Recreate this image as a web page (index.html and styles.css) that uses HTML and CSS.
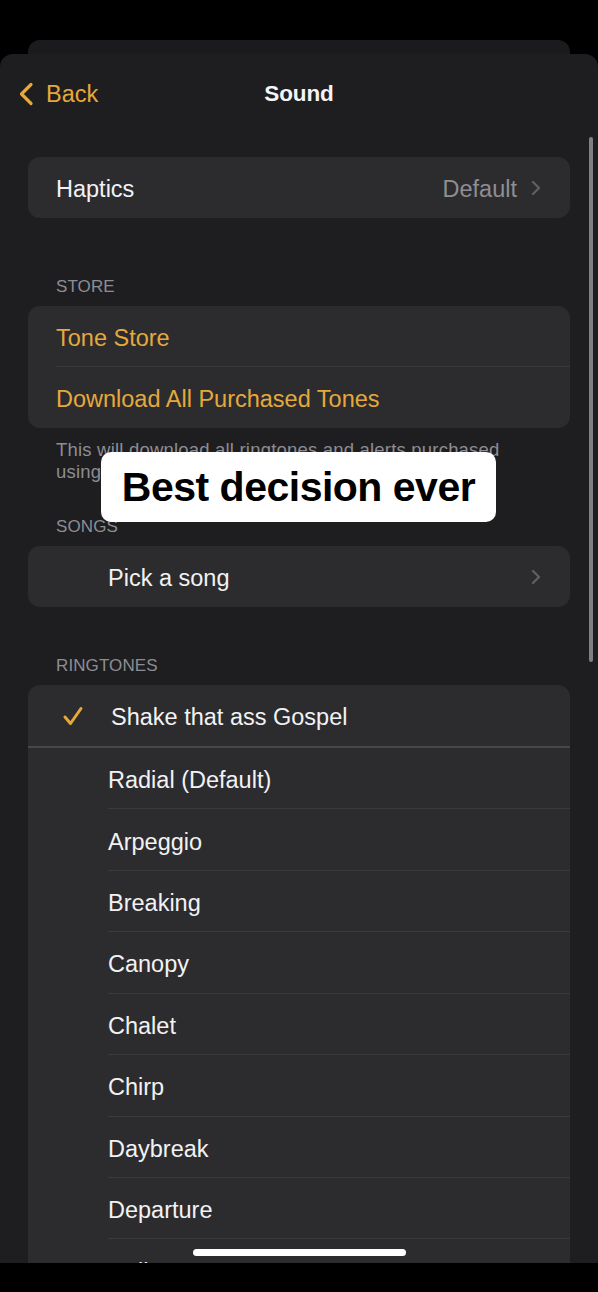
FILE: index.html
```html
<!DOCTYPE html>
<html lang="en">
<head>
<meta charset="utf-8">
<title>Sound</title>
<link rel="stylesheet" href="styles.css">
</head>
<body>
<div class="screen">
  <div class="behind"></div>
  <div class="sheet">
    <header class="nav">
      <div class="back">
        <svg class="back-chev" width="16" height="24" viewBox="0 0 16 24"><polyline points="13,2.5 3.5,12 13,21.5" fill="none" stroke="#e5a93b" stroke-width="3.2" stroke-linecap="round" stroke-linejoin="round"/></svg>
        <span>Back</span>
      </div>
      <div class="title">Sound</div>
      <div class="nav-spacer"></div>
    </header>

    <main class="content">
      <section class="card">
        <div class="row">
          <span class="label">Haptics</span>
          <span class="value">Default</span>
          <svg class="chev" width="10" height="16" viewBox="0 0 10 16"><polyline points="2,2 8,8 2,14" fill="none" stroke="#5d5d62" stroke-width="2.4" stroke-linecap="round" stroke-linejoin="round"/></svg>
        </div>
      </section>

      <h2 class="section-title store-title">STORE</h2>
      <section class="card">
        <div class="row"><span class="label gold">Tone Store</span></div>
        <div class="sep"></div>
        <div class="row"><span class="label gold">Download All Purchased Tones</span></div>
      </section>
      <p class="footnote">This will download all ringtones and alerts purchased using the Apple Account on this iPhone.</p>

      <h2 class="section-title songs-title">SONGS</h2>
      <section class="card">
        <div class="row indent">
          <span class="label">Pick a song</span>
          <svg class="chev" width="10" height="16" viewBox="0 0 10 16"><polyline points="2,2 8,8 2,14" fill="none" stroke="#5d5d62" stroke-width="2.4" stroke-linecap="round" stroke-linejoin="round"/></svg>
        </div>
      </section>

      <h2 class="section-title ring-title">RINGTONES</h2>
      <section class="card tones">
        <div class="row selected">
          <svg class="check" width="22" height="22" viewBox="0 0 22 22"><polyline points="3,12 8.5,18.5 19,3.5" fill="none" stroke="#e5a93b" stroke-width="3" stroke-linecap="round" stroke-linejoin="round"/></svg>
          <span class="label">Shake that ass Gospel</span>
        </div>
        <div class="sep-strong"></div>
        <div class="tone">Radial (Default)</div>
        <div class="tone">Arpeggio</div>
        <div class="tone">Breaking</div>
        <div class="tone">Canopy</div>
        <div class="tone">Chalet</div>
        <div class="tone">Chirp</div>
        <div class="tone">Daybreak</div>
        <div class="tone">Departure</div>
        <div class="tone">Dollop</div>
        <div class="tone">Journey</div>
      </section>
    </main>

    <div class="scroll-ind"></div>
    <div class="caption">Best decision ever</div>
    <div class="home-ind"></div>
  </div>
  <div class="bottom-bar"></div>
</div>
</body>
</html>
```

FILE: styles.css
```css
html, body {
  margin: 0;
  padding: 0;
  background: #000;
}
body {
  width: 598px;
  height: 1292px;
  overflow: hidden;
  font-family: "Liberation Sans", Arial, sans-serif;
  color: #f2f2f4;
}
.screen {
  display: flex;
  flex-direction: column;
  height: 1292px;
  padding-top: 40px;
  box-sizing: border-box;
}
.behind {
  height: 14px;
  margin: 0 28px;
  background: #1b1b1d;
  border-radius: 12px 12px 0 0;
  flex: none;
}
.sheet {
  position: relative;
  height: 1209px;
  flex: none;
  background: #1e1e21;
  border-radius: 13px 13px 0 0;
  overflow: hidden;
}
.bottom-bar {
  flex: 1;
  background: #000;
}

/* nav */
.nav {
  height: 78px;
  box-sizing: border-box;
  padding: 2px 18px 0;
  display: flex;
  align-items: center;
  justify-content: space-between;
}
.back {
  display: flex;
  align-items: center;
  gap: 12px;
  color: #e5a93b;
  font-size: 23.5px;
  width: 120px;
}
.back-chev { display: block; }
.title {
  font-weight: bold;
  font-size: 22.5px;
  color: #f4f4f6;
  letter-spacing: -0.1px;
}
.nav-spacer { width: 120px; }

/* content */
.content {
  padding-top: 25px;
  display: flex;
  flex-direction: column;
}
.card {
  margin: 0 28px;
  background: #2c2c2f;
  border-radius: 12px;
  overflow: hidden;
}
.row {
  height: 61px;
  box-sizing: border-box;
  display: flex;
  align-items: center;
  padding: 4px 29px 0 28px;
  font-size: 23.5px;
}
.row .label { flex: 1; }
.row .value {
  color: #8e8e93;
  margin-right: 14px;
}
.chev { display: block; flex: none; margin-top: -3px; }
.gold { color: #e5a93b; }
.sep {
  height: 1px;
  margin-left: 28px;
  background: #3a3a3d;
  margin-top: -1px;
}
.indent { padding-left: 80px; }

.section-title {
  margin: 0;
  padding: 0 56px;
  font-size: 17px;
  line-height: 22px;
  font-weight: normal;
  color: #8d8d93;
  letter-spacing: 0.1px;
}
.store-title { margin-top: 58px; margin-bottom: 8px; }
.songs-title { margin-top: 33px; margin-bottom: 8px; }
.ring-title { margin-top: 48px; margin-bottom: 8px; }

.footnote {
  margin: 11px 0 0;
  padding-left: 56px;
  width: 470px;
  font-size: 18.5px;
  line-height: 22px;
  letter-spacing: 0.2px;
  color: #8d8d93;
}

/* ringtones */
.selected {
  padding-left: 34px;
  gap: 27px;
}
.check { display: block; flex: none; margin-top: -3px; }
.sep-strong {
  height: 2px;
  background: #47474b;
}
.tone {
  height: 61.43px;
  box-sizing: border-box;
  padding-top: 5px;
  border-bottom: 1px solid #3a3a3d;
  margin-left: 80px;
  display: flex;
  align-items: center;
  font-size: 23.5px;
}

/* overlays */
.scroll-ind {
  position: absolute;
  right: 5px;
  top: 83px;
  width: 4px;
  height: 525px;
  border-radius: 2px;
  background: #7f7f84;
}
.caption {
  position: absolute;
  left: 101px;
  top: 398px;
  width: 395px;
  height: 70px;
  background: #fff;
  border-radius: 10px;
  color: #000;
  font-weight: bold;
  font-size: 41px;
  letter-spacing: -0.5px;
  display: flex;
  align-items: center;
  justify-content: center;
}
.home-ind {
  position: absolute;
  left: 193px;
  top: 1195px;
  width: 213px;
  height: 7px;
  border-radius: 4px;
  background: #fff;
}
```
